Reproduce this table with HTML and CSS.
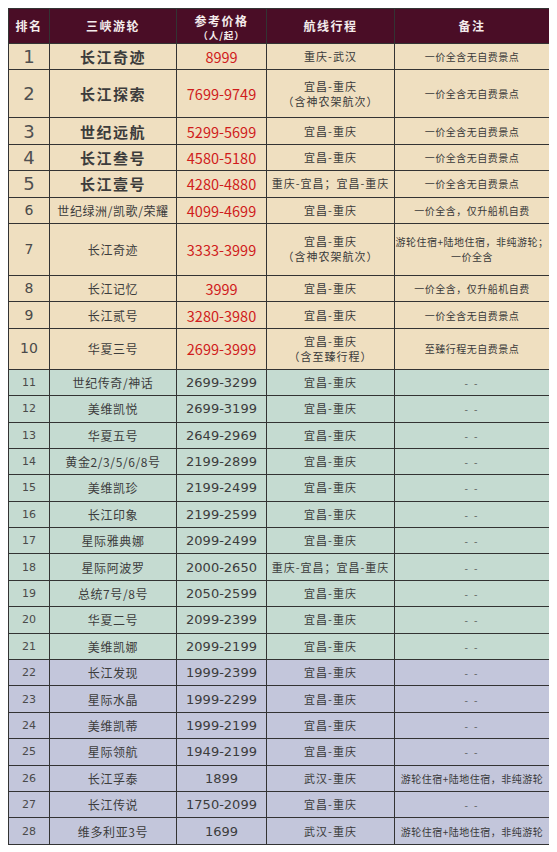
FILE: index.html
```html
<!DOCTYPE html>
<html lang="zh-CN">
<head>
<meta charset="utf-8">
<title>三峡游轮参考价格</title>
<link rel="stylesheet" href="styles.css">
</head>
<body>
<table class="rank-table">
  <colgroup>
    <col class="c-rank"><col class="c-name"><col class="c-price"><col class="c-route"><col class="c-note">
  </colgroup>
  <thead>
    <tr class="head">
      <th>排名</th>
      <th>三峡游轮</th>
      <th><span class="h-main">参考价格</span><span class="h-sub">（人/起）</span></th>
      <th>航线行程</th>
      <th>备注</th>
    </tr>
  </thead>
  <tbody>
    <tr class="g1 big"><td class="rank">1</td><td class="name">长江奇迹</td><td class="price">8999</td><td class="route">重庆-武汉</td><td class="note">一价全含无自费景点</td></tr>
    <tr class="g1 big tall2"><td class="rank">2</td><td class="name">长江探索</td><td class="price">7699-9749</td><td class="route">宜昌-重庆<br>（含神农架航次）</td><td class="note">一价全含无自费景点</td></tr>
    <tr class="g1 big"><td class="rank">3</td><td class="name">世纪远航</td><td class="price">5299-5699</td><td class="route">宜昌-重庆</td><td class="note">一价全含无自费景点</td></tr>
    <tr class="g1 big"><td class="rank">4</td><td class="name">长江叁号</td><td class="price">4580-5180</td><td class="route">宜昌-重庆</td><td class="note">一价全含无自费景点</td></tr>
    <tr class="g1 big"><td class="rank">5</td><td class="name">长江壹号</td><td class="price">4280-4880</td><td class="route">重庆-宜昌；宜昌-重庆</td><td class="note">一价全含无自费景点</td></tr>
    <tr class="g1 mid"><td class="rank">6</td><td class="name">世纪绿洲/凯歌/荣耀</td><td class="price">4099-4699</td><td class="route">宜昌-重庆</td><td class="note">一价全含，仅升船机自费</td></tr>
    <tr class="g1 mid tall7"><td class="rank">7</td><td class="name">长江奇迹</td><td class="price">3333-3999</td><td class="route">宜昌-重庆<br>（含神农架航次）</td><td class="note">游轮住宿+陆地住宿，非纯游轮；<br>一价全含</td></tr>
    <tr class="g1 mid"><td class="rank">8</td><td class="name">长江记忆</td><td class="price">3999</td><td class="route">宜昌-重庆</td><td class="note">一价全含，仅升船机自费</td></tr>
    <tr class="g1 mid"><td class="rank">9</td><td class="name">长江贰号</td><td class="price">3280-3980</td><td class="route">宜昌-重庆</td><td class="note">一价全含无自费景点</td></tr>
    <tr class="g1 mid tall10"><td class="rank">10</td><td class="name">华夏三号</td><td class="price">2699-3999</td><td class="route">宜昌-重庆<br>（含至臻行程）</td><td class="note">至臻行程无自费景点</td></tr>

    <tr class="g2"><td class="rank">11</td><td class="name">世纪传奇/神话</td><td class="price">2699-3299</td><td class="route">宜昌-重庆</td><td class="note dash">- -</td></tr>
    <tr class="g2"><td class="rank">12</td><td class="name">美维凯悦</td><td class="price">2699-3199</td><td class="route">宜昌-重庆</td><td class="note dash">- -</td></tr>
    <tr class="g2"><td class="rank">13</td><td class="name">华夏五号</td><td class="price">2649-2969</td><td class="route">宜昌-重庆</td><td class="note dash">- -</td></tr>
    <tr class="g2"><td class="rank">14</td><td class="name">黄金2/3/5/6/8号</td><td class="price">2199-2899</td><td class="route">宜昌-重庆</td><td class="note dash">- -</td></tr>
    <tr class="g2"><td class="rank">15</td><td class="name">美维凯珍</td><td class="price">2199-2499</td><td class="route">宜昌-重庆</td><td class="note dash">- -</td></tr>
    <tr class="g2"><td class="rank">16</td><td class="name">长江印象</td><td class="price">2199-2599</td><td class="route">宜昌-重庆</td><td class="note dash">- -</td></tr>
    <tr class="g2"><td class="rank">17</td><td class="name">星际雅典娜</td><td class="price">2099-2499</td><td class="route">宜昌-重庆</td><td class="note dash">- -</td></tr>
    <tr class="g2"><td class="rank">18</td><td class="name">星际阿波罗</td><td class="price">2000-2650</td><td class="route">重庆-宜昌；宜昌-重庆</td><td class="note dash">- -</td></tr>
    <tr class="g2"><td class="rank">19</td><td class="name">总统7号/8号</td><td class="price">2050-2599</td><td class="route">宜昌-重庆</td><td class="note dash">- -</td></tr>
    <tr class="g2"><td class="rank">20</td><td class="name">华夏二号</td><td class="price">2099-2399</td><td class="route">宜昌-重庆</td><td class="note dash">- -</td></tr>
    <tr class="g2"><td class="rank">21</td><td class="name">美维凯娜</td><td class="price">2099-2199</td><td class="route">宜昌-重庆</td><td class="note dash">- -</td></tr>

    <tr class="g3"><td class="rank">22</td><td class="name">长江发现</td><td class="price">1999-2399</td><td class="route">宜昌-重庆</td><td class="note dash">- -</td></tr>
    <tr class="g3"><td class="rank">23</td><td class="name">星际水晶</td><td class="price">1999-2299</td><td class="route">宜昌-重庆</td><td class="note dash">- -</td></tr>
    <tr class="g3"><td class="rank">24</td><td class="name">美维凯蒂</td><td class="price">1999-2199</td><td class="route">宜昌-重庆</td><td class="note dash">- -</td></tr>
    <tr class="g3"><td class="rank">25</td><td class="name">星际领航</td><td class="price">1949-2199</td><td class="route">宜昌-重庆</td><td class="note dash">- -</td></tr>
    <tr class="g3"><td class="rank">26</td><td class="name">长江孚泰</td><td class="price">1899</td><td class="route">武汉-重庆</td><td class="note">游轮住宿+陆地住宿，非纯游轮</td></tr>
    <tr class="g3"><td class="rank">27</td><td class="name">长江传说</td><td class="price">1750-2099</td><td class="route">宜昌-重庆</td><td class="note dash">- -</td></tr>
    <tr class="g3"><td class="rank">28</td><td class="name">维多利亚3号</td><td class="price">1699</td><td class="route">武汉-重庆</td><td class="note">游轮住宿+陆地住宿，非纯游轮</td></tr>
  </tbody>
</table>
</body>
</html>
```

FILE: styles.css
```css
html, body {
  background: #ffffff;
}
body {
  margin: 8px;
  font-family: "Noto Sans CJK SC", "Noto Sans", sans-serif;
  color: #3a3a3a;
}
.rank-table {
  width: 541px;
  table-layout: fixed;
  border-collapse: collapse;
  border: 1px solid #333;
}
.c-rank { width: 41px; }
.c-name { width: 127px; }
.c-price { width: 90px; }
.c-route { width: 128px; }
.c-note { width: 155px; }

.rank-table th,
.rank-table td {
  border: 1px solid #333;
  padding: 0;
  text-align: center;
  vertical-align: middle;
  white-space: nowrap;
  overflow: hidden;
}
.head th {
  height: 34px;
  background: #4a0d26;
  color: #f4ecec;
  font-size: 12px;
  font-weight: 700;
  letter-spacing: 1.5px;
  line-height: 14px;
}
.h-main, .h-sub {
  display: block;
}
.h-main {
  line-height: 17px;
}
.h-sub {
  font-size: 9.5px;
  line-height: 12px;
  letter-spacing: 1px;
}

.rank-table tbody td {
  height: 25.4px;
  line-height: 13px;
}
.g1 td { background: #efdfc0; }
.g2 td { background: #c5dbd1; }
.g3 td { background: #c3c6db; }

.rank {
  font-family: "DejaVu Sans", sans-serif;
  font-size: 11px;
  color: #4a4a4a;
}
.name {
  font-size: 12px;
  letter-spacing: 0.6px;
  color: #3c3c3c;
}
.price {
  font-family: "DejaVu Sans", sans-serif;
  font-size: 13px;
  color: #3c3c3c;
}
.route {
  font-size: 11px;
  letter-spacing: 1px;
  color: #3a3a3a;
}
.rank-table tbody .route { line-height: 15px; }
.note {
  font-size: 10px;
  letter-spacing: 0.5px;
  color: #3a3a3a;
}
.rank-table tbody .note { line-height: 15px; }
.note.dash {
  letter-spacing: 2px;
  color: #555;
}

.g1 .price {
  font-family: "Noto Sans CJK SC", sans-serif;
  font-size: 14.5px;
  color: #d01c1c;
}
.big .rank {
  font-size: 18px;
  color: #505050;
}
.big .name {
  font-size: 15px;
  font-weight: 700;
  letter-spacing: 1.5px;
}
.mid .rank {
  font-size: 14px;
}
.rank-table tbody .tall2 td { height: 47px; }
.rank-table tbody .tall7 td { height: 51px; }
.rank-table tbody .tall10 td { height: 40px; }
```
